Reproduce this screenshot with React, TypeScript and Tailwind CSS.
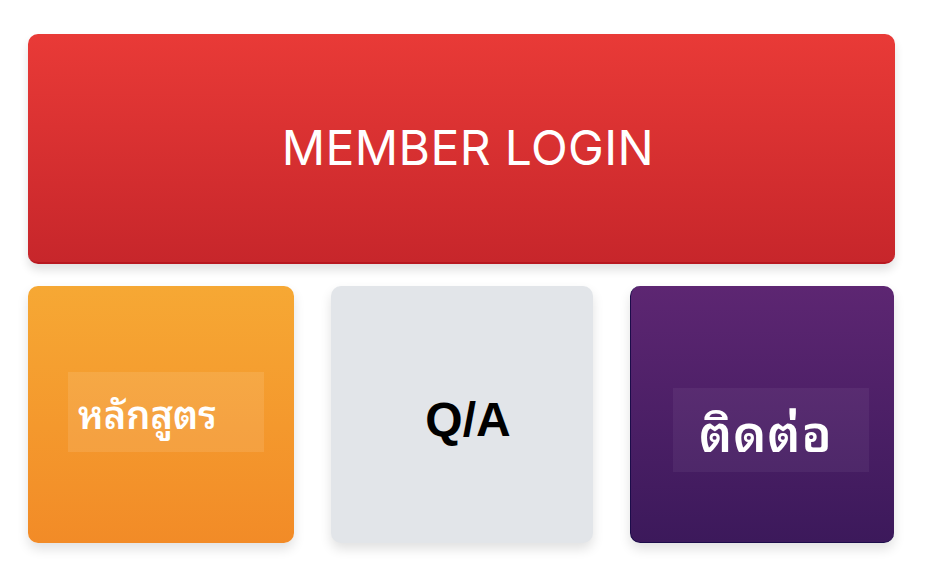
import React from "react";

const thai = "'Noto Sans Thai Looped', Loma, Garuda, Kinnari, 'Tlwg Typo', Sarabun, 'Noto Sans Thai', 'DejaVu Sans', sans-serif";

export default function App() {
  return (
    <div className="w-[936px] h-[563px] bg-white overflow-hidden" style={{ fontFamily: "Inter, 'Liberation Sans', sans-serif" }}>
      <div className="pt-[34px] pl-[28px] w-[895px] flex flex-col gap-[22px]">
        <div className="h-[230px] rounded-[10px] bg-gradient-to-b from-[#e93a37] to-[#c7262b] border-b-2 border-[#b81820] shadow-[0_6px_10px_rgba(0,0,0,0.12)] flex items-center justify-center pl-[13px]">
          <span className="text-white text-[48px] tracking-[0.4px] font-normal" style={{ fontFamily: "Inter, 'Liberation Sans', sans-serif" }}>
            MEMBER LOGIN
          </span>
        </div>
        <div className="grid grid-cols-[266px_262px_264px] gap-x-[37px] h-[257px]">
          <div className="rounded-[10px] bg-gradient-to-b from-[#f6a834] to-[#f28b27] shadow-[0_6px_12px_rgba(0,0,0,0.12)] flex items-center pl-[40px] pb-[6px]">
            <div className="w-[196px] h-[80px] bg-white/10 flex items-center pl-[10px]">
              <span className="text-white text-[38px] font-semibold leading-none" style={{ fontFamily: thai }}>
                หลักสูตร
              </span>
            </div>
          </div>
          <div className="rounded-[10px] bg-[#e2e5e9] shadow-[0_6px_12px_rgba(0,0,0,0.12)] flex items-center justify-center pl-[12px] pt-[10px]">
            <span className="text-black text-[48px] font-bold" style={{ fontFamily: "'Liberation Sans', Arial, sans-serif" }}>
              Q/A
            </span>
          </div>
          <div className="rounded-[10px] bg-gradient-to-b from-[#5d2672] to-[#3c195b] border-l border-b border-[#1c0c4a] shadow-[0_6px_12px_rgba(0,0,0,0.12)] flex items-center pl-[42px] pt-[32px]">
            <div className="w-[196px] h-[84px] bg-white/5 flex items-center pl-[26px]">
              <span className="text-white text-[50px] tracking-[1px] font-semibold leading-none" style={{ fontFamily: thai }}>
                ติดต่อ
              </span>
            </div>
          </div>
        </div>
      </div>
    </div>
  );
}
